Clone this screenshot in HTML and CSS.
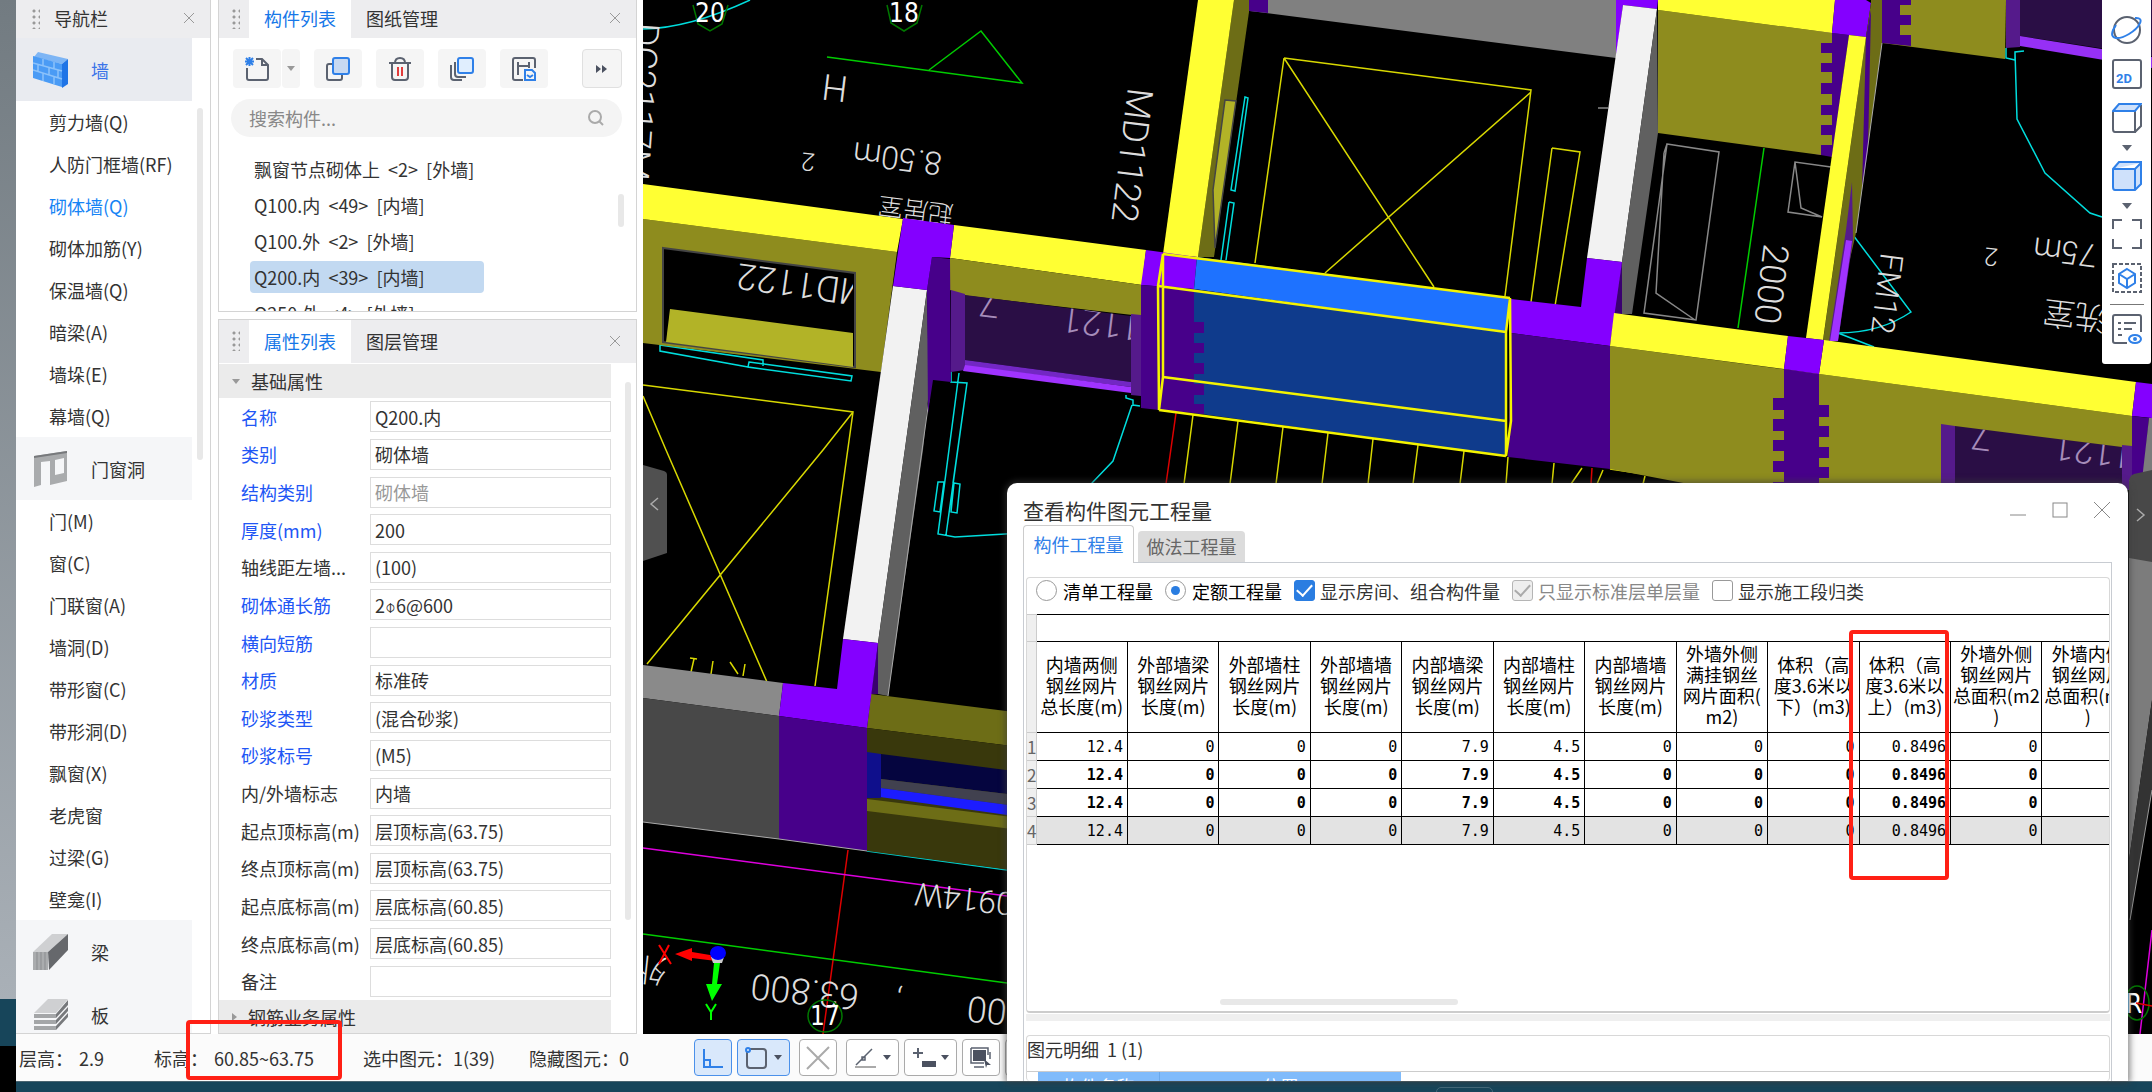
FILE: index.html
```html
<!DOCTYPE html>
<html lang="zh-CN">
<head>
    <meta charset="UTF-8">
    <title>查看构件图元工程量</title>
    <link rel="stylesheet" href="styles.css">
</head>
<body>
    <div class="desktop">
        <div class="wallpaper"></div>
        <div class="desktop-teal"></div>
        <div class="desktop-black"></div>
    </div>

    <div class="app">
        <div class="workspace">
            <!-- 导航栏 -->
            <nav class="nav panel">
                <div class="panel-head">
                    <span class="grip"></span>
                    <span class="nav-title">导航栏</span>
                    <button class="close" aria-label="关闭"><svg width="12" height="12" viewBox="0 0 12 12"><path d="M1 1L11 11M11 1L1 11"/></svg></button>
                </div>
                <div class="nav-body">
                    <div class="nav-list">
                        <a href="#" class="nav-group current">
                            <svg width="36" height="37" viewBox="0 0 36 37">
                                <path d="M1 6L5 1L35 8L29 13Z" fill="#7db5f5"/>
                                <path d="M0 5L29 13V36L0 27Z" fill="#4a9bf5"/>
                                <path d="M29 13L35 8V33L29 37Z" fill="#1f74e6"/>
                                <path d="M0 12L29 20M0 19L29 28M10 8V15M21 11V18M5 14V21M16 16V24M25 19V27M10 22V30M21 25V33" stroke="#8cc2fa" fill="none" stroke-width="1.5"/>
                            </svg>
                            <span>墙</span>
                        </a>
                        <a href="#" class="nav-item">剪力墙(Q)</a>
                        <a href="#" class="nav-item">人防门框墙(RF)</a>
                        <a href="#" class="nav-item active">砌体墙(Q)</a>
                        <a href="#" class="nav-item">砌体加筋(Y)</a>
                        <a href="#" class="nav-item">保温墙(Q)</a>
                        <a href="#" class="nav-item">暗梁(A)</a>
                        <a href="#" class="nav-item">墙垛(E)</a>
                        <a href="#" class="nav-item">幕墙(Q)</a>
                        <a href="#" class="nav-group">
                            <svg width="36" height="37" viewBox="0 0 36 37">
                                <path d="M1 6L34 1V31L17 35V11L8 12V35L1 37ZM22 10V25L31 23V8Z" fill="#a9abad" fill-rule="evenodd"/>
                                <path d="M1 6L34 1V3L1 8Z" fill="#77797c"/>
                            </svg>
                            <span>门窗洞</span>
                        </a>
                        <a href="#" class="nav-item">门(M)</a>
                        <a href="#" class="nav-item">窗(C)</a>
                        <a href="#" class="nav-item">门联窗(A)</a>
                        <a href="#" class="nav-item">墙洞(D)</a>
                        <a href="#" class="nav-item">带形窗(C)</a>
                        <a href="#" class="nav-item">带形洞(D)</a>
                        <a href="#" class="nav-item">飘窗(X)</a>
                        <a href="#" class="nav-item">老虎窗</a>
                        <a href="#" class="nav-item">过梁(G)</a>
                        <a href="#" class="nav-item">壁龛(I)</a>
                        <a href="#" class="nav-group">
                            <svg width="36" height="37" viewBox="0 0 36 37">
                                <path d="M0 19L19 1H35L15 19Z" fill="#cfd0d2"/>
                                <path d="M15 19L35 1V17L16 37Z" fill="#66686c"/>
                                <path d="M0 19H15V37H0Z" fill="#aaacae"/>
                                <path d="M4 19V37M8 19V37M12 19V37" stroke="#8b8d90"/>
                            </svg>
                            <span>梁</span>
                        </a>
                        <a href="#" class="nav-group">
                            <svg width="36" height="33" viewBox="0 0 36 33">
                                <path d="M1 15L15 1H35L23 15Z" fill="#cfd0d2"/>
                                <path d="M1 16H23V20H1ZM1 22H23V26H1ZM1 28H23V32H1Z" fill="#a4a6a8"/>
                                <path d="M23 16L35 2V7L23 20ZM23 22L35 9V13L23 26ZM23 28L35 15V19L23 32Z" fill="#77797c"/>
                            </svg>
                            <span>板</span>
                        </a>
                    </div>
                    <div class="scroll nav-scroll"></div>
                </div>
            </nav>

            <div class="side">
                <!-- 构件列表 -->
                <section class="panel components">
                    <div class="panel-head">
                        <span class="grip"></span>
                        <button class="tab active">构件列表</button>
                        <button class="tab">图纸管理</button>
                        <button class="close" aria-label="关闭"><svg width="12" height="12" viewBox="0 0 12 12"><path d="M1 1L11 11M11 1L1 11"/></svg></button>
                    </div>
                    <div class="tools">
                        <div class="split">
                            <button class="tool" aria-label="新建"><svg width="24" height="24" viewBox="0 0 24 24"><path d="M2 11V21Q2 23 4 23H21Q23 23 23 21V8L17 2H11M17 2V8H23"/><path class="b" d="M1 1L8 8M8 1L1 8M4.5 0V9M0 4.5H9"/></svg></button>
                            <button class="tool drop" aria-label="更多新建"><i class="caret"></i></button>
                        </div>
                        <button class="tool" aria-label="复制"><svg width="24" height="24" viewBox="0 0 24 24"><path d="M7 7H3Q1 7 1 9V21Q1 23 3 23H14Q16 23 16 21V17"/><rect class="b" x="7" y="1" width="16" height="16" rx="2" fill="#c7d9f2"/></svg></button>
                        <button class="tool" aria-label="删除"><svg width="24" height="24" viewBox="0 0 24 24"><path d="M1 6H23M7 6Q7 1 12 1Q17 1 17 6M4 6V20Q4 23 7 23H17Q20 23 20 20V6"/><path class="r" d="M10 10V19M14 10V19"/></svg></button>
                        <button class="tool" aria-label="层间复制"><svg width="24" height="24" viewBox="0 0 24 24"><path d="M1 8V20Q1 23 4 23H12M5 5V17Q5 20 8 20H16"/><rect class="b" x="8" y="1" width="15" height="15" rx="2" fill="#e0eefe"/></svg></button>
                        <button class="tool" aria-label="存档"><svg width="24" height="24" viewBox="0 0 24 24"><path d="M23 11V3Q23 1 21 1H3Q1 1 1 3V21Q1 23 3 23H11M6 5V18M6 9H17M17 5V11"/><path class="b" d="M13 13H20L23 16V23H13ZM15 18L18 20L21 18"/></svg></button>
                        <button class="tool more" aria-label="更多"><svg width="12" height="10" viewBox="0 0 12 10"><path class="f" d="M0 1L5 5L0 9ZM6 1L11 5L6 9Z"/></svg></button>
                    </div>
                    <div class="search">
                        <input type="text" aria-label="搜索构件" placeholder="搜索构件...">
                        <svg width="16" height="16" viewBox="0 0 16 16"><circle cx="7" cy="7" r="6"/><path d="M11 11L15 15"/></svg>
                    </div>
                    <div class="list-wrap">
                        <div class="list">
                            <a href="#">飘窗节点砌体上  &lt;2&gt;  [外墙]</a>
                            <a href="#">Q100.内  &lt;49&gt;  [内墙]</a>
                            <a href="#">Q100.外  &lt;2&gt;  [外墙]</a>
                            <a href="#" class="selected">Q200.内  &lt;39&gt;  [内墙]</a>
                            <a href="#">Q250.外  &lt;4&gt;  [外墙]</a>
                        </div>
                        <div class="scroll list-scroll"></div>
                    </div>
                </section>

                <!-- 属性列表 -->
                <section class="panel properties">
                    <div class="panel-head tall">
                        <span class="grip"></span>
                        <button class="tab active">属性列表</button>
                        <button class="tab">图层管理</button>
                        <button class="close" aria-label="关闭"><svg width="12" height="12" viewBox="0 0 12 12"><path d="M1 1L11 11M11 1L1 11"/></svg></button>
                    </div>
                    <div class="props-wrap">
                        <div class="props">
                            <div class="props-group"><i class="caret"></i>基础属性</div>
                            <div class="fields">
                                <label class="key" for="p1">名称</label><input id="p1" type="text" value="Q200.内">
                                <label class="key" for="p2">类别</label><input id="p2" type="text" value="砌体墙">
                                <label class="key" for="p3">结构类别</label><input id="p3" type="text" value="砌体墙" disabled>
                                <label class="key" for="p4">厚度(mm)</label><input id="p4" type="text" value="200">
                                <label for="p5">轴线距左墙...</label><input id="p5" type="text" value="(100)">
                                <label class="key" for="p6">砌体通长筋</label><input id="p6" type="text" value="2⌽6@600">
                                <label class="key" for="p7">横向短筋</label><input id="p7" type="text" value="">
                                <label class="key" for="p8">材质</label><input id="p8" type="text" value="标准砖">
                                <label class="key" for="p9">砂浆类型</label><input id="p9" type="text" value="(混合砂浆)">
                                <label class="key" for="p10">砂浆标号</label><input id="p10" type="text" value="(M5)">
                                <label for="p11">内/外墙标志</label><input id="p11" type="text" value="内墙">
                                <label for="p12">起点顶标高(m)</label><input id="p12" type="text" value="层顶标高(63.75)">
                                <label for="p13">终点顶标高(m)</label><input id="p13" type="text" value="层顶标高(63.75)">
                                <label for="p14">起点底标高(m)</label><input id="p14" type="text" value="层底标高(60.85)">
                                <label for="p15">终点底标高(m)</label><input id="p15" type="text" value="层底标高(60.85)">
                                <label for="p16">备注</label><input id="p16" type="text" value="">
                            </div>
                            <div class="props-group"><i class="caret right"></i>钢筋业务属性</div>
                        </div>
                        <div class="scroll props-scroll"></div>
                    </div>
                </section>
            </div>

            <!-- 三维视图 -->
            <main class="viewport">
                <svg class="scene" viewBox="643 0 1509 1034" preserveAspectRatio="xMinYMin slice">
                    <defs>
                        <clipPath id="opening"><path d="M670 249L853 273V333L670 309Z"/></clipPath>
                        <clipPath id="doorLeft"><path d="M965 295L1131 316V382L965 360Z"/></clipPath>
                        <clipPath id="doorRight"><path d="M1955 426L2122 447V490H1955Z"/></clipPath>
                    </defs>
                    <!-- 底图线条 -->
                    <g fill="none" stroke="#0dd" stroke-width="1.5">
                        <path d="M643 29Q690 28 750 0"/>
                        <path d="M2006 48V58L2015 60V52L2024 51M2015 52L2017 119L2045 173L2090 213L2102 217"/>
                        <path d="M1853 235L1911 312Q1880 333 1838 333L1874 347"/>
                        <path d="M951 372V382L967 383L953 483M959 373L938 534L955 537L1040 532M967 383L946 535M938 482H944L940 512L934 511ZM954 483L960 484L957 513L951 512Z"/>
                        <path d="M1126 395V398L1133 400V405L1140 406M1132 405L1113 461L1092 483L1070 500"/>
                        <path d="M660 345L763 360V366M660 345V351L748 367M749 362L852 376L851 381L748 367Z"/>
                        <path d="M1245 97L1248 98L1235 191L1231 190ZM1229 202L1234 203L1226 260M1229 202L1221 260"/>
                    </g>
                    <g fill="none" stroke="#d8d800" stroke-width="1.5">
                        <path d="M1284 58L1531 90L1505 296M1284 58L1255 263M1284 58L1434 287M1531 92L1325 273M1552 148L1580 152L1555 306M1552 148L1531 302"/>
                        <path d="M643 385L853 412L815 686M643 396L666 450L767 682M853 412L823 450L647 664"/>
                        <path d="M690 658L697 659M694 659L691 672M713 661L711 674M730 662L738 674M745 664L743 676"/>
                        <path d="M1193 415L1184 484M1238 421L1230 484M1283 427L1276 484M1328 433L1322 484M1373 439L1368 484M1418 445L1413 484M1464 451L1460 484M1508 457L1506 484M1554 463L1552 484M1582 468L1571 484M1603 470L1597 484M1645 476L1643 484M1610 469L1720 485"/>
                    </g>
                    <path d="M1176 413L1166 484M1592 468L1591 484M848 850L823 1034" stroke="#d00" stroke-width="1.5"/>
                    <path d="M827 57L1022 83L981 31L929 70M643 934L1007 983M1764 148L1738 328" fill="none" stroke="#0c0" stroke-width="1.5"/>
                    <path d="M643 848L1007 896M2152 930L2140 1034" stroke="#d0d" stroke-width="1.5"/>
                    <path d="M867 851L1007 870" stroke="#0cc" stroke-width="1.5"/>
                    <path d="M1667 144L1719 152L1696 320L1644 313ZM1664 153L1656 293L1695 320M1664 153L1667 144M1831 167L1795 162L1788 212L1822 217L1801 208L1795 162M1598 108H1608" fill="none" stroke="#888" stroke-width="1.5"/>

                    <!-- 标注文字 -->
                    <g class="cad">
                        <text transform="translate(634 22) rotate(94)">DC2117M</text>
                        <text transform="translate(1128 87) rotate(97)">MD1122</text>
                        <text transform="translate(849 77) rotate(187)">H</text>
                        <text class="mid" transform="translate(943 153) rotate(187)">8.50m</text>
                        <text class="tiny" transform="translate(816 154) rotate(187)">2</text>
                        <text class="tiny" transform="translate(954 206) rotate(187)">起居室</text>
                        <text transform="translate(1764 243) rotate(97)">2000</text>
                        <text class="mid" transform="translate(1881 252) rotate(97)">FM12</text>
                        <text class="mid" transform="translate(2098 245) rotate(187)">75m</text>
                        <text class="tiny" transform="translate(1999 249) rotate(187)">2</text>
                        <text class="room" transform="translate(2140 312) rotate(187)">盥洗室</text>
                        <text class="mid" transform="translate(1015 893) rotate(186)">0914W</text>
                        <text transform="translate(860 985) rotate(186)">63.800</text>
                        <text transform="translate(1008 1000) rotate(186)">00</text>
                        <text class="room" transform="translate(668 960) rotate(186)">外</text>
                        <text class="mid" transform="translate(903 990) rotate(186)">,</text>
                    </g>
                    <g fill="none" stroke="#070" stroke-width="1.5">
                        <path d="M693 5L698 24L710 31L722 24L728 5M887 5L891 23L904 31L917 23L922 5"/>
                        <ellipse cx="825" cy="1016" rx="17" ry="16"/>
                        <ellipse cx="2137" cy="1003" rx="12" ry="17"/>
                    </g>
                    <g class="axis-no">
                        <text x="695" y="22">20</text>
                        <text x="889" y="22">18</text>
                        <text x="810" y="1025">17</text>
                        <text x="2126" y="1013">R</text>
                    </g>
                    <path d="M2136 1003L2152 1006" stroke="#d00" stroke-width="1.5"/>

                    <!-- 顶部墙体 -->
                    <path d="M1250 0H1616V58L1250 11Z" fill="#808080"/>
                    <path d="M1249 0H1268V13L1249 11ZM1815 31L1849 35L1832 157L1815 154Z" fill="#47008a"/>
                    <path d="M1658 10L1832 33V43H1821V53H1832V63H1821V72H1832V83H1821V94H1832V105H1821V115H1832V125H1821V135H1832V145H1821V155L1658 133Z" fill="#8e8c1e"/>
                    <path d="M1658 0H1835L1832 33L1658 10Z" fill="#ff3"/>
                    <path d="M1616 0H1658L1657 9L1623 5L1616 58ZM1835 0H1866L1871 3L1866 37L1849 35L1832 33Z" fill="#8400ff"/>
                    <path d="M1882 0H2006L2005 59L1882 43Z" fill="#8e8c1e"/>
                    <path d="M1882 0H1911V5H1900V15H1911V25H1900V35H1911V46L1882 43Z" fill="#47008a"/>
                    <path d="M2020 0H2152V56L2020 36Z" fill="#2a0e45"/>
                    <path d="M2006 0H2020V47L2006 48Z" fill="#551a8b"/>
                    <path d="M2020 36L2152 57V68L2020 46Z" fill="#9630f5"/>
                    <path d="M1866 37L1871 3V0H1882V43L1856 233L1831 341H1823Z" fill="#6d6d16"/>
                    <path d="M1866 37L1871 10L1868 150L1862 190Z" fill="#47008a"/>
                    <path d="M1852 182L1853 240L1838 341H1829L1846 230Z" fill="#551a8b"/>
                    <path d="M1846 240L1852 241L1838 341H1830Z" fill="#a033ff"/>
                    <path d="M1849 35L1866 37L1823 340L1806 338Z" fill="#ff3"/>
                    <path d="M1882 43L1856 233" fill="none" stroke="#aaa"/>
                    <path d="M1623 5L1657 9L1622 262L1587 258Z" fill="#f2f2f2"/>
                    <path d="M1657 9L1658 133L1632 314H1614L1622 262Z" fill="#606060"/>
                    <path d="M1622 262V314H1614Z" fill="#3a0070"/>

                    <!-- 竖向墙 -->
                    <path d="M1234 0H1249V12L1214 257H1198Z" fill="#6d6d16"/>
                    <path d="M1225 100L1236 101L1215 248L1213 190Z" fill="#b2b327" stroke="#444" stroke-width="1.5"/>
                    <path d="M1198 0H1234L1198 257L1163 254Z" fill="#ff3"/>

                    <!-- 左侧长墙 -->
                    <path d="M643 219L897 252L881 372L643 343Z" fill="#8e8c1e"/>
                    <path d="M663 248L855 273V367L663 342Z" fill="#000" stroke="#444" stroke-width="2"/>
                    <g clip-path="url(#opening)">
                        <text class="cad" transform="translate(872 282) rotate(188)">MD1122</text>
                    </g>
                    <path d="M670 309L853 333V367L666 342Z" fill="#b2b327"/>
                    <path d="M643 184L903 219L897 252L643 219ZM954 225L1146 250L1142 285L950 258Z" fill="#ff3"/>
                    <path d="M950 258L1142 285L1141 316L961 295L950 290Z" fill="#8e8c1e"/>
                    <path d="M965 295L1131 316V382L965 360Z" fill="#2a0e45"/>
                    <g clip-path="url(#doorLeft)">
                        <text class="cad door" transform="translate(1143 316) rotate(187)">1121</text>
                        <text class="cad door" transform="translate(1001 293) rotate(187)">7</text>
                    </g>
                    <path d="M951 290L965 294V370L951 372ZM1131 314L1141 315V396L1131 395Z" fill="#551a8b"/>
                    <path d="M965 360L1131 382V387L965 366Z" fill="#7327c4"/>
                    <path d="M965 365L1131 387V393L963 371Z" fill="#a033ff"/>
                    <path d="M893 286L927 290L878 643L843 639Z" fill="#f2f2f2"/>
                    <path d="M927 290L929 390L923 450L888 696L878 694V643Z" fill="#606060"/>
                    <path d="M929 400L888 696" stroke="#aaa"/>
                    <path d="M932 257L950 259L951 382L933 380L928 413L927 290Z" fill="#47008a"/>
                    <path d="M903 218L954 225L950 258L932 257L927 290L893 286ZM1146 250L1197 257L1194 289L1141 285Z" fill="#8400ff"/>

                    <!-- 选中的墙 -->
                    <path d="M1197 257L1509 298L1506 333L1194 289Z" fill="#1e72ff"/>
                    <path d="M1194 289L1506 333V456L1194 413Z" fill="#0f3b8c"/>
                    <path d="M1141 285L1194 289V322H1204V333H1194V343H1204V353H1194V363H1204V374H1194V384H1204V395H1194V404H1204V414L1159 410L1141 408Z" fill="#47008a"/>
                    <path d="M1511 299L1581 307L1587 258L1622 262L1610 346L1511 333Z" fill="#8400ff"/>
                    <path d="M1511 333L1610 346V469L1508 457Z" fill="#47008a"/>
                    <path d="M1163 254L1510 298M1158 286L1506 332M1163 377L1506 421M1159 410L1506 456M1163 254L1158 286L1159 410L1163 377ZM1510 298L1506 332V456L1511 421Z" fill="none" stroke="#f4f400" stroke-width="2.5"/>

                    <!-- 右侧长墙 -->
                    <path d="M1610 346L2132 416V490H1720L1610 469Z" fill="#8e8c1e"/>
                    <path d="M1955 426L2122 447V490H1955Z" fill="#2a0e45"/>
                    <g clip-path="url(#doorRight)">
                        <text class="cad door" transform="translate(2135 444) rotate(187)">1121</text>
                        <text class="cad door" transform="translate(1993 426) rotate(187)">7</text>
                    </g>
                    <path d="M1941 424L1955 426V490H1941ZM2122 445L2132 446V490H2122Z" fill="#551a8b"/>
                    <path d="M1784 369L1819 374V405H1829V417H1819V426H1829V437H1819V447H1829V458H1819V467H1829V478H1819V490H1773V482H1784V472H1773V461H1784V451H1773V440H1784V431H1773V419H1784V410H1773V398H1784Z" fill="#47008a"/>
                    <path d="M1614 313L1788 336L1784 369L1610 346ZM1824 340L2136 382L2132 416L1819 374Z" fill="#ff3"/>
                    <path d="M1788 336L1824 340L1819 374L1784 369ZM2136 382L2152 384V418L2132 416Z" fill="#8400ff"/>
                    <path d="M2132 416L2149 418L2142 490H2132Z" fill="#47008a"/>
                    <path d="M2149 418H2152V700L2129 860V480H2142Z" fill="#7c7c7c"/>
                    <path d="M2152 700V790L2130 920L2129 860Z" fill="#333"/>
                    <path d="M2152 790L2130 920" stroke="#999"/>

                    <!-- 底部墙体 -->
                    <path d="M643 665L783 683L779 716L643 698Z" fill="#8a8a8a"/>
                    <path d="M643 698L779 716V839L643 822Z" fill="#484848"/>
                    <path d="M871 694L1100 723V757L867 728Z" fill="#6d6d16"/>
                    <path d="M867 728L1100 757V882L867 851Z" fill="#39380c"/>
                    <path d="M881 754L1100 782V805L881 779Z" fill="#05053f"/>
                    <path d="M881 779L1100 805V817L881 788Z" fill="#41414f"/>
                    <path d="M881 788L1100 817V828L880 797Z" fill="#1c1cff"/>
                    <path d="M867 752L881 754V798H867Z" fill="#0f0f8c"/>
                    <path d="M867 799L1100 828V840L867 811Z" fill="#6d6d16"/>
                    <path d="M878 643V694H871Z" fill="#3a0070"/>
                    <path d="M783 683L837 689L843 639L878 643L867 728L779 716Z" fill="#8400ff"/>
                    <path d="M779 716L867 728V851L779 839Z" fill="#47008a"/>
                    <path d="M643 822L779 839L867 851" fill="none" stroke="#aaa"/>

                    <!-- 坐标轴 -->
                    <path d="M675 954L692 948V952L716 956V961L692 958V961Z" fill="#f00"/>
                    <path d="M714 963H720L717 984H722L712 1001L706 984H712Z" fill="#0f0"/>
                    <path d="M711 957H724L722 963H713Z" fill="#ccc"/>
                    <ellipse cx="718" cy="953" rx="8" ry="7" fill="#00f"/>
                    <path d="M659 945L671 964M669 945L659 964" stroke="#f00" stroke-width="2"/>
                    <path d="M706 1004L711 1012L716 1004M711 1012V1020" fill="none" stroke="#0f0" stroke-width="2"/>

                    <path d="M643 465L664 471Q667 472 667 475V553L643 561Z" fill="#505050"/>
                    <path d="M2152 470L2134 474Q2129 476 2129 482V558L2152 562Z" fill="#484848"/>
                    <path d="M658 498L651 504L658 510M2137 509L2144 515L2137 521" fill="none" stroke="#aaa" stroke-width="1.5"/>
                </svg>

                <div class="view-tools">
                    <button aria-label="动态观察"><svg width="32" height="30" viewBox="0 0 32 30"><ellipse cx="16" cy="15" rx="13" ry="13"/><path class="b" d="M24 3C35 2 28 13 18 19C8 25 -2 25 2 15L5 10"/></svg></button>
                    <button aria-label="二维"><svg width="30" height="30" viewBox="0 0 30 30"><rect x="1" y="1" width="28" height="28" rx="2"/><text x="4" y="24">2D</text></svg></button>
                    <button aria-label="俯视"><svg width="30" height="30" viewBox="0 0 30 30"><path d="M1 9V26Q1 29 3 29H23V8M23 29L29 23V2"/><path class="b" d="M1 8L7 1H29L23 8Z" fill="#cfe1fb"/></svg></button>
                    <i class="caret big"></i>
                    <button aria-label="实体显示"><svg width="30" height="30" viewBox="0 0 30 30"><path class="b" d="M1 8L7 1H29V23L23 29H3Q1 29 1 26ZM1 8H23L29 2M23 8V29" fill="#cfe1fb"/></svg></button>
                    <i class="caret big"></i>
                    <button aria-label="全屏"><svg width="30" height="30" viewBox="0 0 30 30"><path d="M1 10V1H10M20 1H29V10M29 20V29H20M10 29H1V20"/></svg></button>
                    <button aria-label="局部三维"><svg width="30" height="30" viewBox="0 0 30 30"><rect x="1" y="1" width="28" height="28" stroke-dasharray="4 2"/><path class="b" d="M15 6L23 11V20L15 25L7 20V11ZM7 11L15 16L23 11M15 16V25"/></svg></button>
                    <hr>
                    <button aria-label="显示设置"><svg width="30" height="30" viewBox="0 0 30 30"><path d="M29 18V3Q29 1 27 1H3Q1 1 1 3V27Q1 29 3 29H15M6 9H9M12 9H24M6 15H9M12 15H20M6 21H10"/><ellipse class="b" cx="23" cy="25" rx="6" ry="4"/><circle class="b" cx="23" cy="25" r="1"/></svg></button>
                </div>
            </main>
        </div>

        <footer class="status">
            <span class="s1">层高：<b>2.9</b></span>
            <span class="s2">标高：<b>60.85~63.75</b></span>
            <span class="s3">选中图元：1(39)</span>
            <span class="s4">隐藏图元：0</span>
            <div class="snap">
                <button class="on" aria-label="正交"><svg width="22" height="22" viewBox="0 0 22 22"><path class="b" d="M2 2V20H21M2 13H8V20"/></svg></button>
                <button class="on wide" aria-label="框选"><svg width="22" height="22" viewBox="0 0 22 22"><rect x="2" y="2" width="19" height="19" rx="3"/><circle class="b" cx="3" cy="3" r="2" fill="#d9e8fb"/></svg><i class="caret dark"></i></button>
                <button aria-label="交点"><svg width="24" height="24" viewBox="0 0 24 24"><path class="g" d="M1 1L23 23M23 1L1 23"/></svg></button>
                <button class="wide" aria-label="角度"><svg width="22" height="22" viewBox="0 0 22 22"><path class="g" d="M1 20H22"/><path d="M2 18L18 2M8 10H11V13H8Z" stroke-width="1.5"/></svg><i class="caret dark"></i></button>
                <button class="wide" aria-label="偏移"><svg width="24" height="22" viewBox="0 0 24 22"><path d="M1 6H11M6 1V11"/><path class="f" d="M10 14H24V20H10Z"/></svg><i class="caret dark"></i></button>
                <button aria-label="图元"><svg width="22" height="22" viewBox="0 0 22 22"><path class="f" d="M3 3H16V14H3Z"/><path d="M1 1H18V8M1 1V16H14M20 5V12M4 20H14" stroke-width="1.5"/><path class="f" d="M14 12L21 18H17L16 21Z"/></svg></button>
                <button aria-label="更多"></button>
            </div>
        </footer>

        <!-- 查看构件图元工程量 -->
        <div class="dialog" role="dialog" aria-labelledby="dlgTitle">
            <div class="dialog-head">
                <h1 id="dlgTitle">查看构件图元工程量</h1>
                <button aria-label="最小化"><svg width="16" height="16" viewBox="0 0 16 16"><path d="M0 13H16"/></svg></button>
                <button aria-label="最大化"><svg width="16" height="16" viewBox="0 0 16 16"><rect x="1" y="1" width="14" height="14"/></svg></button>
                <button aria-label="关闭"><svg width="16" height="16" viewBox="0 0 16 16"><path d="M0 0L16 16M16 0L0 16"/></svg></button>
            </div>
            <div class="dialog-tabs">
                <button class="active">构件工程量</button>
                <button>做法工程量</button>
            </div>
            <div class="dialog-body">
                <div class="group quantities">
                    <div class="options">
                        <label class="strong"><input type="radio" name="mode">清单工程量</label>
                        <label class="strong"><input type="radio" name="mode" checked>定额工程量</label>
                        <label><input type="checkbox" checked>显示房间、组合构件量</label>
                        <label class="off"><input type="checkbox" checked disabled>只显示标准层单层量</label>
                        <label><input type="checkbox">显示施工段归类</label>
                    </div>
                    <div class="table-wrap">
                        <table>
                            <thead>
                                <tr><td class="no"></td><td colspan="12"></td></tr>
                                <tr>
                                    <td class="no"></td>
                                    <th>内墙两侧<br>钢丝网片<br>总长度(m)</th>
                                    <th>外部墙梁<br>钢丝网片<br>长度(m)</th>
                                    <th>外部墙柱<br>钢丝网片<br>长度(m)</th>
                                    <th>外部墙墙<br>钢丝网片<br>长度(m)</th>
                                    <th>内部墙梁<br>钢丝网片<br>长度(m)</th>
                                    <th>内部墙柱<br>钢丝网片<br>长度(m)</th>
                                    <th>内部墙墙<br>钢丝网片<br>长度(m)</th>
                                    <th>外墙外侧<br>满挂钢丝<br>网片面积(<br>m2)</th>
                                    <th>体积（高<br>度3.6米以<br>下）(m3)</th>
                                    <th>体积（高<br>度3.6米以<br>上）(m3)</th>
                                    <th>外墙外侧<br>钢丝网片<br>总面积(m2<br>)</th>
                                    <th>外墙内侧<br>钢丝网片<br>总面积(m2<br>)</th>
                                </tr>
                            </thead>
                            <tbody>
                                <tr><td class="no">1</td><td>12.4</td><td>0</td><td>0</td><td>0</td><td>7.9</td><td>4.5</td><td>0</td><td>0</td><td>0</td><td>0.8496</td><td>0</td><td></td></tr>
                                <tr class="sum"><td class="no">2</td><td>12.4</td><td>0</td><td>0</td><td>0</td><td>7.9</td><td>4.5</td><td>0</td><td>0</td><td>0</td><td>0.8496</td><td>0</td><td></td></tr>
                                <tr class="sum"><td class="no">3</td><td>12.4</td><td>0</td><td>0</td><td>0</td><td>7.9</td><td>4.5</td><td>0</td><td>0</td><td>0</td><td>0.8496</td><td>0</td><td></td></tr>
                                <tr class="total"><td class="no">4</td><td>12.4</td><td>0</td><td>0</td><td>0</td><td>7.9</td><td>4.5</td><td>0</td><td>0</td><td>0</td><td>0.8496</td><td>0</td><td></td></tr>
                            </tbody>
                        </table>
                    </div>
                    <div class="scroll table-scroll"></div>
                </div>
                <div class="splitter"></div>
                <div class="group detail">
                    <div class="detail-title">图元明细&nbsp; 1 (1)</div>
                    <div class="detail-head"><span>构件名称</span><span class="pos">位置</span></div>
                </div>
            </div>
            <div class="mark mark-volume"></div>
        </div>
        <div class="mark mark-level"></div>

        <div class="taskbar"><i></i></div>
    </div>
</body>
</html>
```
FILE: styles.css
```css
* { box-sizing: border-box; }
body { margin: 0; display: flex; height: 100vh; overflow: hidden; background: #000; color: #333; font: 18px/24px "Noto Sans CJK SC", sans-serif; }
button { margin: 0; padding: 0; border: none; background: none; font: inherit; color: inherit; cursor: pointer; }
a { color: inherit; text-decoration: none; }
svg { display: block; flex: none; }
button svg { fill: none; stroke: #5b6270; stroke-width: 2; }
button svg .b { stroke: #2f80e8; }
button svg .r { stroke: #e23c3c; }
button svg .g { stroke: #aaa; }
button svg .f { fill: #4b5160; stroke: none; }

/* desktop edge */
.desktop { width: 16px; flex: none; display: flex; flex-direction: column; }
.wallpaper { flex: 1; background: linear-gradient(#727b81, #a9b0b7); }
.desktop-teal { height: 47px; background: #17455a; }
.desktop-black { height: 46px; background: #000; }

.app { flex: 1; min-width: 0; position: relative; display: flex; flex-direction: column; background: #fff; }
.workspace { flex: 1; min-height: 0; display: flex; }

/* panels */
.panel { background: #fff; border: 1px solid #d4d4d4; overflow: hidden; display: flex; flex-direction: column; }
.panel-head { display: flex; align-items: stretch; height: 38px; flex: none; background: #ededef; padding-bottom: 2px; }
.panel-head.tall { height: 43px; }
.grip { width: 9px; height: 21px; margin: 0 9px 0 12px; align-self: center; background: radial-gradient(circle, #999 1px, transparent 2px) 0 0 / 6px 6px; }
.tab { width: 102px; }
.tab.active { background: #fff; box-shadow: 0 2px #fff; color: #1677e8; }
.close { margin-left: auto; padding: 0 15px; }
.close svg { stroke: #999; stroke-width: 1; }
.scroll { background: #e8e8e8; border-radius: 3px; width: 6px; flex: none; }
.caret { display: block; flex: none; width: 0; height: 0; border: 4px solid transparent; border-top: 5px solid #999; border-bottom: none; }
.caret.right { border: 4px solid transparent; border-left: 5px solid #999; border-right: none; }
.caret.dark { border-top-color: #4b5160; }
.caret.big { border-width: 6px 5px 0; border-top-color: #5b6270; }

.nav { width: 195px; flex: none; border-left: none; border-top: none; }
.nav .grip { margin-left: 15px; }
.nav-title { margin-left: 5px; align-self: center; }
.nav-body { display: flex; flex: 1; min-height: 0; }
.nav-list { width: 176px; overflow: hidden; }
.nav-scroll { height: 352px; margin: 70px 0 0 5px; }
.nav-group { display: flex; align-items: center; height: 63px; padding-left: 17px; gap: 22px; background: #f5f6f8; }
.nav-group.current { background: #e9ebf0; color: #3c74e8; }
.nav-item { display: block; height: 42px; line-height: 42px; padding-left: 33px; white-space: nowrap; }
.nav-item.active { color: #1684f5; }

.side { width: 419px; flex: none; margin: 0 6px 0 7px; display: flex; flex-direction: column; gap: 7px; }
.components { height: 312px; flex: none; border-top: none; }
.properties { flex: 1; min-height: 0; }

.tools { display: flex; gap: 14px; padding: 11px 14px 0 14px; }
.tool { width: 48px; height: 39px; display: grid; place-items: center; background: #f5f5f5; border-radius: 4px; }
.split { display: flex; gap: 1px; }
.split .drop { width: 18px; }
.tool.more { width: 40px; margin-left: auto; border: 1px solid #e0e0e0; }
.search { display: flex; align-items: center; height: 38px; margin: 11px 14px 0 12px; padding: 0 18px; background: #f4f4f4; border-radius: 19px; flex: none; }
.search input { flex: 1; min-width: 0; border: none; background: none; font: inherit; outline: none; padding: 0; }
.search input::placeholder { color: #888; opacity: 1; }
.search svg { fill: none; stroke: #aaa; stroke-width: 2; }
.list-wrap { display: flex; justify-content: space-between; flex: 1; min-height: 0; padding: 16px 12px 0 31px; }
.list { width: 234px; overflow: hidden; }
.list a { display: block; height: 32px; line-height: 32px; margin-bottom: 4px; padding-left: 4px; border-radius: 4px; white-space: pre; }
.list .selected { background: #c2d9f1; }
.list-scroll { height: 33px; margin-top: 41px; }

.props-wrap { display: flex; justify-content: space-between; flex: 1; min-height: 0; padding: 1px 5px 0 0; }
.props { width: 392px; overflow: hidden; }
.props-group { display: flex; align-items: center; gap: 11px; height: 34px; padding-left: 13px; background: #ebebeb; }
.props-scroll { height: 538px; margin-top: 18px; }
.fields { display: grid; grid-template-columns: 129px 241px; grid-template-rows: repeat(16, 1fr); height: 602px; padding-left: 22px; align-items: center; white-space: nowrap; }
.fields input { width: 100%; height: 31px; padding: 0 4px; border: 1px solid #ddd; background: #fff; font: inherit; color: #333; outline: none; }
.fields input:disabled { color: #999; }
.fields .key { color: #2156f5; }

/* 3d view */
.viewport { flex: 1; min-width: 0; position: relative; background: #000; overflow: hidden; }
.scene { width: 100%; height: 100%; }
.cad { fill: #ddd; font-family: Roboto, "Noto Sans CJK SC", sans-serif; font-weight: 300; font-size: 36px; }
.cad .mid { font-size: 32px; }
.cad .room { font-size: 32px; }
.cad .tiny { font-size: 25px; }
.cad.door { fill: #a68cba; }
.axis-no { fill: #fff; font: 26px "DejaVu Sans Condensed", "DejaVu Sans", sans-serif; }
.view-tools { position: absolute; top: 0; right: 1px; width: 49px; height: 364px; padding-top: 15px; background: #fff; border-radius: 0 0 3px 3px; display: flex; flex-direction: column; align-items: center; gap: 14px; }
.view-tools .caret { margin: -2px 0 -4px; }
.view-tools hr { width: 34px; margin: -3px 0 -5px; border: none; border-top: 1px solid #777; }
.view-tools text { fill: #2f80e8; stroke: none; font: bold 13px Roboto, sans-serif; }

/* status bar */
.status { position: relative; display: flex; align-items: center; height: 47px; flex: none; background: #fbfbfb; white-space: nowrap; }
.status span { flex: none; display: flex; }
.status b { font-weight: 400; margin-left: 6px; }
.s1 { width: 135px; padding-left: 3px; }
.s2 { width: 211px; padding-left: 3px; }
.s3 { width: 166px; padding-left: 1px; }
.s4 { width: 150px; padding-left: 1px; }
.snap { display: flex; gap: 5px; margin-left: 16px; }
.snap button { display: flex; align-items: center; justify-content: center; width: 38px; height: 37px; background: #fff; border: 1px solid #aaa; border-radius: 4px; }
.snap button.wide { width: 53px; justify-content: space-around; padding: 0 4px; }
.snap button.on { background: #d9e8fb; border: 1px solid #4a90ea; }
.snap button:nth-child(3) { margin: 0 4px; }

/* quantity dialog */
.dialog { position: absolute; left: 991px; right: 24px; top: 483px; bottom: 11px; padding: 0 16px; background: #fff; border-radius: 10px 10px 0 0; box-shadow: 0 0 6px 2px rgba(60,60,60,0.6); display: flex; flex-direction: column; }
.dialog-head { display: flex; align-items: center; gap: 26px; height: 42px; padding: 12px 2px 0 0; }
.dialog-head h1 { margin: 0 auto 0 0; font-size: 21px; line-height: 28px; font-weight: 400; }
.dialog-head svg { stroke: #888; stroke-width: 1; }
.dialog-tabs { display: flex; align-items: flex-end; gap: 4px; height: 38px; margin-bottom: -1px; position: relative; }
.dialog-tabs button { width: 107px; height: 31px; margin-bottom: 1px; padding-bottom: 2px; background: #dcdcdc; border-radius: 4px 4px 0 0; color: #666; }
.dialog-tabs .active { width: 111px; height: 38px; margin-bottom: 0; background: #fff; border: 1px solid #ccc; border-bottom: none; color: #2f80e8; }
.dialog-body { flex: 1; min-height: 0; display: flex; flex-direction: column; border: 1px solid #c8ccd2; border-bottom: none; padding: 14px 1px 0 2px; }
.group { border: 1px solid #d8d8d8; border-radius: 4px; }
.quantities { flex: 1; min-height: 0; display: flex; flex-direction: column; border-bottom: 2px solid #ccc; }
.options { display: flex; align-items: center; gap: 12px; height: 36px; padding: 0 9px 11px; white-space: nowrap; }
.options label { display: flex; align-items: center; gap: 5px; }
.options .strong { color: #000; gap: 6px; }
.options .off { color: #888; }
.options input { appearance: none; width: 21px; height: 21px; margin: 0; background: #fff; border: 1px solid #999; border-radius: 3px; display: grid; place-items: center; }
.options input[type="radio"] { border-radius: 50%; }
.options input[type="radio"]:checked::after { content: ""; width: 9px; height: 9px; border-radius: 50%; background: #2a7de1; }
.options input[type="checkbox"]:checked { background: #2a7de1; border-color: #2a7de1; }
.options input[type="checkbox"]:checked::after { content: ""; width: 7px; height: 13px; margin-bottom: 4px; border: solid #fff; border-width: 0 2px 2px 0; transform: rotate(42deg); }
.options input[type="checkbox"]:disabled { background: #eee; border-color: #b5b5b5; }
.options input[type="checkbox"]:disabled::after { border-color: #aaa; }
.table-wrap { flex: 1; min-height: 0; overflow: hidden; }
.table-wrap table { width: 1107px; table-layout: fixed; border-collapse: collapse; }
.table-wrap td, .table-wrap th { border: 1px solid #000; padding: 0 4px; color: #000; }
.table-wrap th { height: 91px; padding: 0 0 4px; font-weight: 400; line-height: 21px; white-space: nowrap; overflow: hidden; }
.table-wrap thead td { height: 27px; }
.table-wrap tbody td { height: 28px; font: 15px/20px "DejaVu Sans Mono", monospace; text-align: right; }
.table-wrap .sum td { font-weight: 700; }
.table-wrap .total td { background: #e3e3e3; }
.table-wrap tr .no, .table-wrap .sum .no { width: 9px; padding: 0; background: #efefef; border-color: #ccc; border-left: none; font: 17px/20px "Noto Sans CJK SC", sans-serif; color: #666; }
.table-scroll { width: 238px; height: 6px; margin: 0 0 6px 193px; }
.splitter { height: 7px; margin-top: 1px; background: #efefef; }
.detail { height: 46px; margin-top: 14px; border-bottom: none; overflow: hidden; flex: none; }
.detail-title { height: 36px; line-height: 26px; border-bottom: 1px solid #ccc; }
.detail-head { display: flex; width: 363px; margin-left: 11px; background: #80bbfb; color: #fff; text-align: center; line-height: 28px; }
.detail-head span { width: 121px; }
.detail-head .pos { flex: 1; border-left: 1px solid #6aa8ea; }

.mark { position: absolute; border: 4px solid #ff2015; border-radius: 4px; }
.mark-volume { left: 842px; top: 147px; width: 100px; height: 250px; }
.mark-level { left: 170px; bottom: 12px; width: 156px; height: 60px; }

.taskbar { height: 11px; flex: none; background: #17455a; border-top: 1px solid #4a6470; overflow: hidden; }
.taskbar i { display: block; width: 57px; height: 12px; margin: 5px 0 0 1420px; border: 1px solid #45697a; border-radius: 5px; }
```
